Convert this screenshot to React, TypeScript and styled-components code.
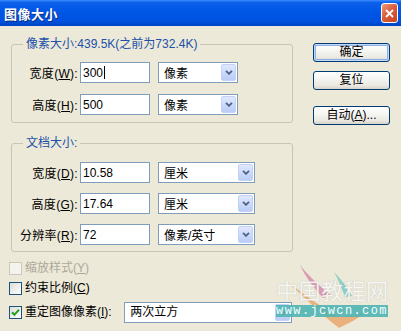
import * as React from "react";
import styled, { createGlobalStyle } from "styled-components";

const GlobalStyle = createGlobalStyle`
  html, body {
    margin: 0;
    padding: 0;
    background: #ECE9D8;
  }
  body {
    font-family: "Liberation Sans", "Noto Sans CJK SC", sans-serif;
    font-size: 12px;
  }
`;

const Dialog = styled.div`
  position: relative;
  width: 401px;
  height: 331px;
  background: #ECE9D8;
  overflow: hidden;
  color: #000;
`;

const TitleBar = styled.div`
  height: 26px;
  box-sizing: border-box;
  padding: 0 3px 0 4px;
  display: flex;
  align-items: center;
  justify-content: space-between;
  background: linear-gradient(#3C8DFF 0%, #0A5FEA 10%, #0056E6 45%, #0052E0 80%, #0043C6 100%);
`;

const Title = styled.span`
  color: #fff;
  font-family: "Noto Sans CJK SC", sans-serif;
  font-weight: bold;
  font-size: 13px;
  letter-spacing: 0.5px;
  text-shadow: 1px 1px 0 #0B2A7A;
`;

const CloseButton = styled.div`
  width: 17px;
  height: 20px;
  box-sizing: border-box;
  border: 1px solid #fff;
  border-radius: 3px;
  background: linear-gradient(135deg, #EB9A7E 0%, #DA5F3C 45%, #C8431F 100%);
  display: flex;
  align-items: center;
  justify-content: center;
`;

const Body = styled.div`
  display: flex;
  padding: 11px 0 0 9px;
`;

const LeftColumn = styled.div`
  width: 283px;
  display: flex;
  flex-direction: column;
`;

const RightColumn = styled.div`
  margin-left: 21px;
  padding-top: 6px;
  display: flex;
  flex-direction: column;
`;

const Group = styled.fieldset<{ $gap: number }>`
  margin: ${(p) => p.$gap}px 0 0 2px;
  padding: 0;
  width: 282px;
  min-width: 0;
  box-sizing: border-box;
  border: 1px solid #C9C5B4;
  border-radius: 3px;
`;

const Caption = styled.legend`
  margin-left: 11px;
  padding: 0 3px;
  line-height: 14px;
  font-size: 12px;
  color: #2150A8;
`;

const Rows = styled.div<{ $top: number; $bottom: number; $gap: number }>`
  display: flex;
  flex-direction: column;
  gap: ${(p) => p.$gap}px;
  padding: ${(p) => p.$top}px 0 ${(p) => p.$bottom}px 0;
`;

const Row = styled.div`
  display: flex;
  align-items: center;
  height: 21px;
`;

const FieldLabel = styled.label`
  width: 66px;
  text-align: right;
  white-space: nowrap;
  letter-spacing: 0.3px;
`;

const TextField = styled.div`
  width: 70px;
  height: 21px;
  margin-left: 2px;
  box-sizing: border-box;
  border: 1px solid #7F9DB9;
  background: #fff;
  padding: 0 2px;
  display: flex;
  align-items: center;
`;

const Caret = styled.span`
  display: inline-block;
  width: 1px;
  height: 13px;
  margin-left: 1px;
  background: #000;
`;

const Select = styled.div<{ $width: number; $gap: number }>`
  width: ${(p) => p.$width}px;
  height: 21px;
  margin-left: ${(p) => p.$gap}px;
  box-sizing: border-box;
  border: 1px solid #7F9DB9;
  background: #fff;
  padding-left: 5px;
  display: flex;
  align-items: center;
  justify-content: space-between;
`;

const DropButton = styled.div`
  width: 15px;
  height: 17px;
  margin-right: 1px;
  box-sizing: border-box;
  border: 1px solid #C3D2F4;
  border-radius: 2px;
  background: linear-gradient(#E0E9FD, #C8D7FA 60%, #BACDF6);
  display: flex;
  align-items: center;
  justify-content: center;
`;

const Button = styled.button<{ $primary?: boolean; $gap: number }>`
  width: 77px;
  height: 19px;
  margin-top: ${(p) => p.$gap}px;
  padding: 0;
  box-sizing: border-box;
  border: 1px solid #003C74;
  border-radius: 3px;
  background: linear-gradient(#FFFFFF, #F4F4F0 45%, #E9E8E1 80%, #D8D2C6);
  box-shadow: ${(p) =>
    p.$primary ? "inset 0 0 0 1px #C6D8F7, inset 0 0 0 2px #8DB0E6" : "none"};
  font-family: "Liberation Sans", "Noto Sans CJK SC", sans-serif;
  font-size: 12px;
  line-height: 15px;
  color: #000;
`;

const Checks = styled.div`
  margin-top: 10px;
  display: flex;
  flex-direction: column;
  gap: 7px;
`;

const CheckRow = styled.div<{ $disabled?: boolean }>`
  display: flex;
  align-items: center;
  min-height: 13px;
  line-height: 13px;
  color: ${(p) => (p.$disabled ? "#ACA899" : "#000")};
`;

const Box = styled.span<{ $disabled?: boolean }>`
  width: 13px;
  height: 13px;
  box-sizing: border-box;
  flex: none;
  border: 1px solid ${(p) => (p.$disabled ? "#CAC8BB" : "#1C5180")};
  background: ${(p) =>
    p.$disabled ? "#F4F3EE" : "linear-gradient(135deg, #DCDCD7, #FFFFFF)"};
  display: flex;
  align-items: center;
  justify-content: center;
`;

const CheckLabel = styled.span<{ $width?: number }>`
  margin-left: 3px;
  white-space: nowrap;
  ${(p) => (p.$width ? `width: ${p.$width}px;` : "")}
`;

const Watermark = styled.div`
  position: absolute;
  left: 276px;
  top: 278px;
  width: 112px;
  display: flex;
  flex-direction: column;
  gap: 5px;
`;

const Swoosh = styled.svg`
  position: absolute;
  left: 285px;
  top: 262px;
`;

const MarkText = styled.div`
  position: relative;
  font-family: "Noto Sans CJK SC", sans-serif;
  font-size: 22px;
  line-height: 22px;
  letter-spacing: 0.5px;
  color: rgba(255, 255, 255, 0.88);
  text-shadow: 0 0 1px rgba(140, 140, 140, 0.6);
  white-space: nowrap;
`;

const MarkUrl = styled.div`
  position: relative;
  height: 12px;
  background: rgba(80, 180, 178, 0.9);
  color: #F4FFFF;
  font-family: "Liberation Mono", monospace;
  font-size: 12px;
  line-height: 12px;
  letter-spacing: 1.4px;
  text-align: center;
`;

const Chevron = () => (
  <svg width="8" height="5" viewBox="0 0 8 5">
    <path d="M1 0.8 L4 3.8 L7 0.8" fill="none" stroke="#4D6185" strokeWidth="1.8" />
  </svg>
);

const Dropdown = ({ value, width, gap }: { value: string; width: number; gap: number }) => (
  <Select $width={width} $gap={gap}>
    <span>{value}</span>
    <DropButton>
      <Chevron />
    </DropButton>
  </Select>
);

const Field = ({ label, mark, value, unit, unitWidth, caret }: any) => (
  <Row>
    <FieldLabel>
      {label}(<u>{mark}</u>):
    </FieldLabel>
    <TextField>
      {value}
      {caret && <Caret />}
    </TextField>
    <Dropdown value={unit} width={unitWidth} gap={8} />
  </Row>
);

const App = (): React.ReactElement => {
  return (
    <Dialog>
      <GlobalStyle />
      <TitleBar>
        <Title>图像大小</Title>
        <CloseButton>
          <svg width="9" height="9" viewBox="0 0 9 9">
            <path d="M1 1 L8 8 M8 1 L1 8" stroke="#fff" strokeWidth="1.8" />
          </svg>
        </CloseButton>
      </TitleBar>

      <Body>
        <LeftColumn>
          <Group $gap={0}>
            <Caption>像素大小:439.5K(之前为732.4K)</Caption>
            <Rows $top={11} $bottom={7} $gap={11}>
              <Field label="宽度" mark="W" value="300" unit="像素" unitWidth={80} caret />
              <Field label="高度" mark="H" value="500" unit="像素" unitWidth={80} />
            </Rows>
          </Group>

          <Group $gap={13}>
            <Caption>文档大小:</Caption>
            <Rows $top={12} $bottom={6} $gap={10}>
              <Field label="宽度" mark="D" value="10.58" unit="厘米" unitWidth={97} />
              <Field label="高度" mark="G" value="17.64" unit="厘米" unitWidth={97} />
              <Field label="分辨率" mark="R" value="72" unit="像素/英寸" unitWidth={97} />
            </Rows>
          </Group>

          <Checks>
            <CheckRow $disabled>
              <Box $disabled />
              <CheckLabel>
                缩放样式(<u>Y</u>)
              </CheckLabel>
            </CheckRow>
            <CheckRow>
              <Box />
              <CheckLabel>
                约束比例(<u>C</u>)
              </CheckLabel>
            </CheckRow>
            <CheckRow>
              <Box>
                <svg width="9" height="9" viewBox="0 0 9 9">
                  <path d="M1 4.2 L3.4 6.8 L8 1.6" fill="none" stroke="#21A121" strokeWidth="2" />
                </svg>
              </Box>
              <CheckLabel $width={100}>
                重定图像像素(<u>I</u>):
              </CheckLabel>
              <Dropdown value="两次立方" width={169} gap={0} />
            </CheckRow>
          </Checks>
        </LeftColumn>

        <RightColumn>
          <Button $primary $gap={0}>确定</Button>
          <Button $gap={9}>复位</Button>
          <Button $gap={16}>
            自动(<u>A</u>)...
          </Button>
        </RightColumn>
      </Body>

      <Swoosh width="90" height="69" viewBox="0 0 90 69">
        <path d="M15 3 C 22 12, 32 22, 46 33 L 38 36 C 30 27, 21 16, 15 3 Z" fill="#D680A6" opacity="0.75" />
        <path d="M49 10 C 56 17, 62 25, 67 34 L 60 35 C 57 27, 54 19, 49 10 Z" fill="#6CC7C2" opacity="0.75" />
        <path d="M4 21 C 20 36, 38 54, 54 66 C 64 61, 74 56, 82 50 C 72 53, 60 56, 52 54 C 36 45, 20 33, 4 21 Z" fill="#E9A466" opacity="0.8" />
      </Swoosh>

      <Watermark>
        <MarkText>中国教程网</MarkText>
        <MarkUrl>www.jcwcn.com</MarkUrl>
      </Watermark>
    </Dialog>
  );
};

export default App;
